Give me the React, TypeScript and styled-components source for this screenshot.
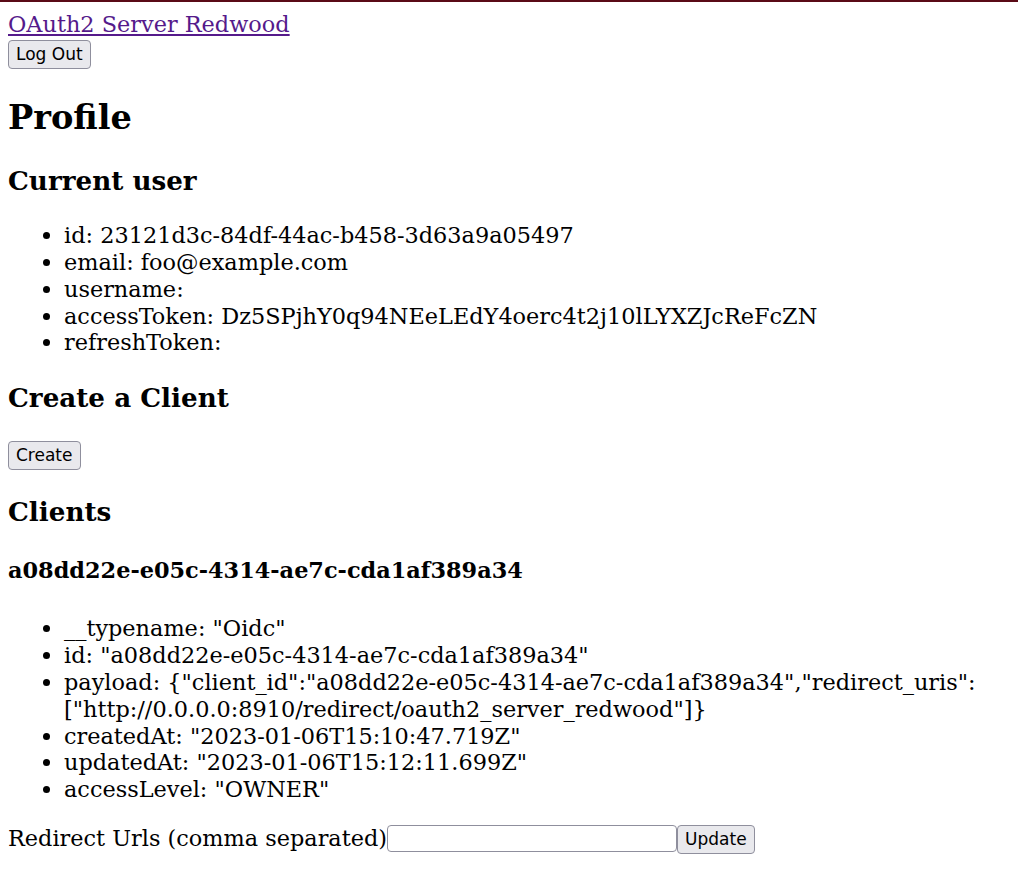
import React, { useState } from 'react';
import styled, { createGlobalStyle } from 'styled-components';

const GlobalStyle = createGlobalStyle`
  body {
    margin: 0;
    font-family: "DejaVu Serif", serif;
    font-size: 22.4px;
    color: #000000;
    background: #ffffff;
  }
`;

const user = {
  id: '23121d3c-84df-44ac-b458-3d63a9a05497',
  email: 'foo@example.com',
  username: '',
  accessToken: 'Dz5SPjhY0q94NEeLEdY4oerc4t2j10lLYXZJcReFcZN',
  refreshToken: '',
};

const client = {
  __typename: 'Oidc',
  id: 'a08dd22e-e05c-4314-ae7c-cda1af389a34',
  payload:
    '{"client_id":"a08dd22e-e05c-4314-ae7c-cda1af389a34","redirect_uris":["http://0.0.0.0:8910/redirect/oauth2_server_redwood"]}',
  createdAt: '2023-01-06T15:10:47.719Z',
  updatedAt: '2023-01-06T15:12:11.699Z',
  accessLevel: 'OWNER',
};

const App = () => {
  const [sRedirectUrls, setRedirectUrls] = useState('');

  return (
    <Page>
      <GlobalStyle />
      <Header>
        <HomeLink href='#'>OAuth2 Server Redwood</HomeLink>
        <div>
          <Button type='button'>Log Out</Button>
        </div>
      </Header>
      <main>
        <Title>Profile</Title>
        <SectionTitle>Current user</SectionTitle>
        <List>
          {Object.entries(user).map(([sKey, sValue]) => (
            <li key={sKey}>
              {sKey}: {sValue}
            </li>
          ))}
        </List>

        <SectionTitle>Create a Client</SectionTitle>
        <CreateForm onSubmit={(e) => e.preventDefault()}>
          <Button type='submit'>Create</Button>
        </CreateForm>

        <SectionTitle>Clients</SectionTitle>
        <ClientTitle>{client.id}</ClientTitle>
        <List>
          {Object.entries(client).map(([sKey, sValue]) => (
            <li key={sKey}>
              {sKey}: {sKey === 'payload' ? sValue : JSON.stringify(sValue)}
            </li>
          ))}
        </List>
        <UpdateForm onSubmit={(e) => e.preventDefault()}>
          <label htmlFor='redirect'>Redirect Urls (comma separated)</label>
          <Input
            id='redirect'
            type='text'
            value={sRedirectUrls}
            onChange={(event) => setRedirectUrls(event.target.value)}
          />
          <Button type='submit'>Update</Button>
        </UpdateForm>
      </main>
    </Page>
  );
};

const Page = styled.div`
  border-top: 2px solid #5a0a16;
  padding: 9px 8px 8px;
`;

const Header = styled.header`
  display: flex;
  flex-direction: column;
  align-items: flex-start;
  gap: 2px;
`;

const HomeLink = styled.a`
  color: #551a8b;
`;

const Title = styled.h1`
  font-size: 33.6px;
  margin: 28px 0;
`;

const SectionTitle = styled.h2`
  font-size: 26.2px;
  margin: 26.2px 0;
`;

const ClientTitle = styled.h3`
  font-size: 22.4px;
  margin: 29.8px 0 32.8px;
`;

const List = styled.ul`
  margin: 22.4px 0;
  padding-left: 56px;
  line-height: 26.8px;
`;

const CreateForm = styled.form`
  display: flex;
  padding-top: 1px;
`;

const UpdateForm = styled.form`
  display: flex;
  align-items: stretch;
  line-height: 27px;
`;

const Button = styled.button`
  font-family: "DejaVu Sans", sans-serif;
  font-size: 17px;
  color: #000000;
  background: #e9e9ed;
  border: 1px solid #8f8f9d;
  border-radius: 4px;
  padding: 4px 7px;
  line-height: 19px;
`;

const Input = styled.input`
  box-sizing: border-box;
  width: 290px;
  height: 27px;
  font-family: "DejaVu Sans", sans-serif;
  font-size: 16px;
  border: 1px solid #8f8f9d;
  border-radius: 4px;
  background: #ffffff;
  padding: 2px 4px;
`;

export default App;
